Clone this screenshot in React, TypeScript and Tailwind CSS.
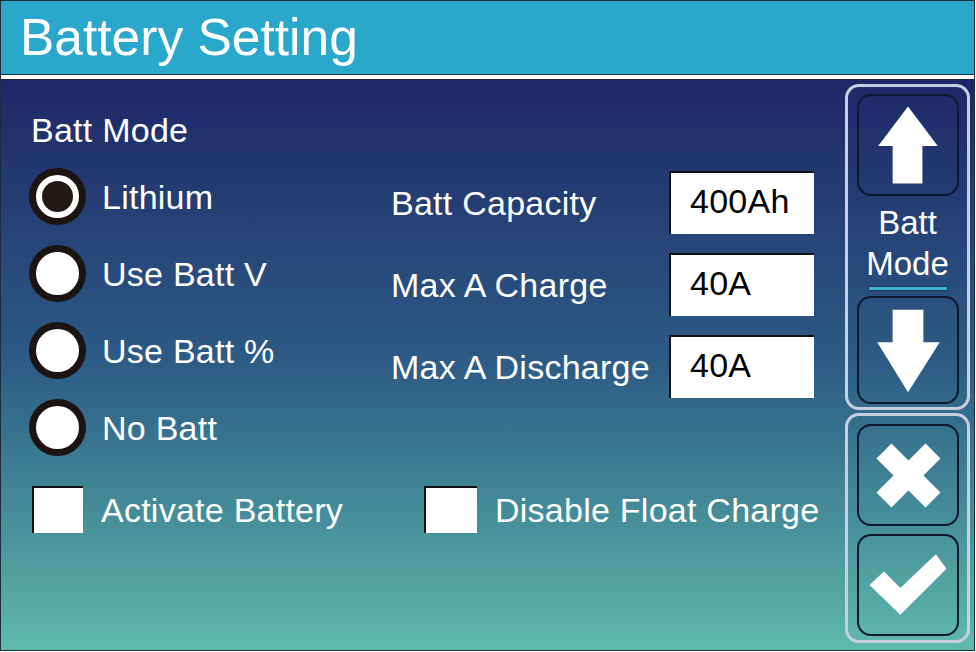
import React from "react";

const font = { fontFamily: '"Liberation Sans", Arial, sans-serif' };

const Radio = ({ checked }: { checked?: boolean }) => (
  <div className="w-[57px] h-[57px] rounded-full border-[7px] border-[#1c1412] bg-white flex items-center justify-center shrink-0">
    {checked && <div className="w-[31px] h-[31px] rounded-full bg-[#231815]" />}
  </div>
);

const radios = [
  { label: "Lithium", checked: true },
  { label: "Use Batt V" },
  { label: "Use Batt %" },
  { label: "No Batt" },
];

const fields = [
  { label: "Batt Capacity", value: "400Ah" },
  { label: "Max A Charge", value: "40A" },
  { label: "Max A Discharge", value: "40A" },
];

const Box = ({ className }: { className: string }) => (
  <div className={`bg-white border-t-2 border-l-2 border-[#111] shrink-0 ${className}`} />
);

const PanelButton = ({
  className,
  children,
}: {
  className: string;
  children: React.ReactNode;
}) => (
  <div
    className={`w-[102px] rounded-[14px] border-2 border-[#0e1a2c] flex items-center justify-center ${className}`}
  >
    {children}
  </div>
);

export default function App() {
  return (
    <div className="w-[976px] h-[652px] bg-white" style={font}>
      <div className="w-[975px] h-[651px] border border-[#1d2b3a] flex flex-col overflow-hidden">
        <div className="h-[74px] bg-[#29a8cb] border-b border-[#1a3344] flex items-center pl-[19px]">
          <span className="text-white text-[51.5px] leading-none">Battery Setting</span>
        </div>
        <div className="h-[5px] bg-white border-b border-[#1a2340]" />
        <div className="flex-1 flex bg-gradient-to-b from-[#1e2767] via-[#2d5c85] to-[#5fbaab]">
          <div className="w-[844px] pl-[28px] pt-[32px] text-white text-[34px] tracking-[0.25px] leading-[36px]">
            <div className="pl-[2px]">Batt Mode</div>
            <div className="flex mt-[20px]">
              <div className="w-[362px] flex flex-col gap-[20px]">
                {radios.map((r) => (
                  <div key={r.label} className="flex items-center gap-[16px]">
                    <Radio checked={r.checked} />
                    <span>{r.label}</span>
                  </div>
                ))}
              </div>
              <div className="flex flex-col gap-[19px] pt-[3px]">
                {fields.map((f) => (
                  <div key={f.label} className="flex items-center">
                    <span className="w-[278px]">{f.label}</span>
                    <div className="w-[145px] h-[63px] bg-white border-t-2 border-l-2 border-[#111] flex items-center pl-[19px] pb-[6px] text-black">
                      {f.value}
                    </div>
                  </div>
                ))}
              </div>
            </div>
            <div className="flex items-center mt-[30px]">
              <div className="w-[395px] flex items-center gap-[18px] pl-[3px]">
                <Box className="w-[51px] h-[47px]" />
                <span>Activate Battery</span>
              </div>
              <div className="flex items-center gap-[18px]">
                <Box className="w-[53px] h-[47px]" />
                <span>Disable Float Charge</span>
              </div>
            </div>
          </div>
          <div className="w-[125px] pt-[4px] flex flex-col gap-[3px]">
            <div className="h-[326px] rounded-[14px] border-[3px] border-[#c6d0e2] flex flex-col items-center pt-[7px]">
              <PanelButton className="h-[102px]">
                <svg width="102" height="102" viewBox="0 0 102 102">
                  <polygon points="51,11 82,52 66,52 66,91 35,91 35,52 20,52" fill="#fff" />
                </svg>
              </PanelButton>
              <div className="h-[88px] pt-[6px] flex flex-col items-center justify-center text-white text-[33px] leading-[41px]">
                <span>Batt</span>
                <span>Mode</span>
              </div>
              <div className="mt-[2px] w-[80px] h-[5px] bg-[#3cb3d3] border border-[#1b3a55]" />
              <PanelButton className="h-[108px] mt-[5px]">
                <svg width="102" height="108" viewBox="0 0 102 108">
                  <polygon points="35,12 67,12 67,46 84,46 51,98 19,46 35,46" fill="#fff" />
                </svg>
              </PanelButton>
            </div>
            <div className="h-[230px] rounded-[14px] border-[3px] border-[#c6d0e2] flex flex-col items-center pt-[8px] gap-[8px]">
              <PanelButton className="h-[102px]">
                <svg width="102" height="102" viewBox="0 0 102 102">
                  <line x1="26" y1="26" x2="77" y2="77" stroke="#fff" strokeWidth="22" />
                  <line x1="77" y1="26" x2="26" y2="77" stroke="#fff" strokeWidth="22" />
                </svg>
              </PanelButton>
              <PanelButton className="h-[102px]">
                <svg width="102" height="102" viewBox="0 0 102 102">
                  <polygon points="26,37 43,54 80,19 91,34 43,82 11,51" fill="#fff" />
                </svg>
              </PanelButton>
            </div>
          </div>
        </div>
      </div>
    </div>
  );
}
